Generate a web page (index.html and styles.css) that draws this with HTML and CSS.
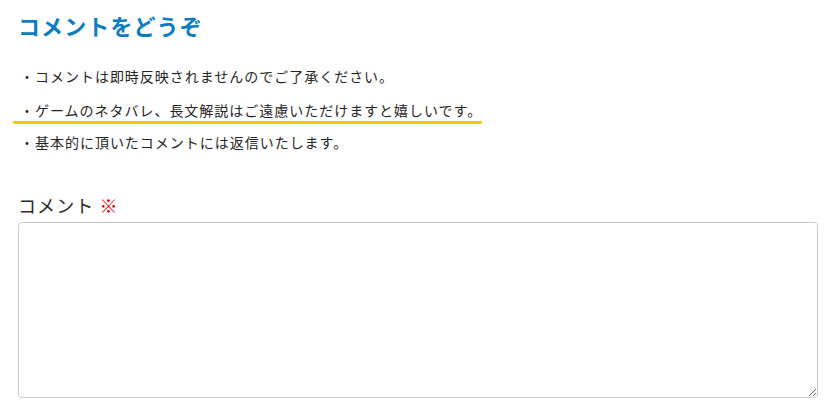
FILE: index.html
```html
<!DOCTYPE html>
<html lang="ja">
<head>
<meta charset="utf-8">
<link rel="stylesheet" href="styles.css">
</head>
<body>
<div class="wrap">
  <h2 class="title">コメントをどうぞ</h2>
  <ul class="notes">
    <li>・コメントは即時反映されませんのでご了承ください。</li>
    <li class="marked">・ゲームのネタバレ、長文解説はご遠慮いただけますと嬉しいです。</li>
    <li>・基本的に頂いたコメントには返信いたします。</li>
  </ul>
  <label class="label" for="c">コメント <span class="req">※</span></label>
  <textarea id="c" class="area"></textarea>
</div>
</body>
</html>
```
FILE: styles.css
```css
* { box-sizing: border-box; }
body {
  margin: 0;
  background: #fff;
  font-family: "Noto Sans CJK JP", "Noto Sans", sans-serif;
  color: #333;
}
.wrap {
  padding: 7px 20px 0 18px;
}
.title {
  margin: 0;
  font-size: 22px;
  font-weight: 700;
  color: #0b7dc2;
  letter-spacing: 0.05em;
  line-height: 36px;
}
.notes {
  list-style: none;
  margin: 22px 0 0 2px;
  padding: 0;
  font-size: 14px;
  letter-spacing: 0.07em;
  line-height: 22px;
  color: #262626;
}
.notes li {
  margin-bottom: 12px;
}
.notes li.marked {
  display: inline-block;
  border-bottom: 3px solid #fcc800;
  border-radius: 2px;
  margin-left: -7px;
  padding-left: 7px;
  padding-right: 0;
  margin-bottom: 7px;
}
.label {
  display: block;
  margin-top: 39px;
  font-size: 18px;
  letter-spacing: 0.06em;
  line-height: 26px;
  color: #2a2a2a;
}
.req {
  color: #e60000;
}
.area {
  display: block;
  width: 800px;
  height: 176px;
  margin-top: 4px;
  border: 1px solid #ccc;
  border-radius: 4px;
}
```
